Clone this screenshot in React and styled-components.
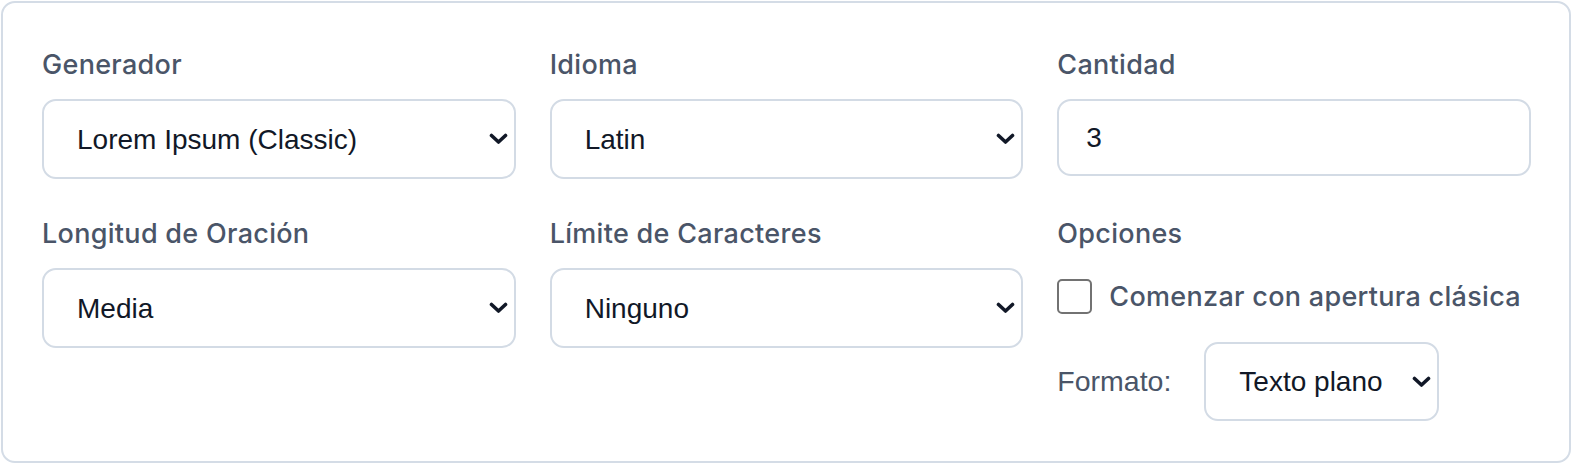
import React from 'react';
import styled, { createGlobalStyle } from 'styled-components';

const GlobalStyle = createGlobalStyle`
  html, body {
    margin: 0;
    padding: 0;
    background: #ffffff;
  }
  body {
    padding: 1px;
  }
`;

const Card = styled.div`
  box-sizing: border-box;
  width: 1570px;
  height: 462px;
  border: 2px solid #d4dce6;
  border-radius: 14px;
  background: #ffffff;
  padding: 46px 38px 0 39px;
  display: grid;
  grid-template-columns: repeat(3, 1fr);
  align-content: start;
  align-items: start;
  column-gap: 34px;
  row-gap: 39px;
`;

const Field = styled.div`
  display: flex;
  flex-direction: column;
  min-width: 0;
`;

const Label = styled.label`
  display: block;
  font-family: Inter, "Liberation Sans", sans-serif;
  font-weight: 500;
  font-size: 27px;
  line-height: 32px;
  letter-spacing: 0.3px;
  color: #4a5568;
  margin-bottom: 18px;
`;

const SelectWrap = styled.div`
  position: relative;
  width: ${p => p.$width || '100%'};
`;

const Select = styled.select`
  appearance: none;
  -webkit-appearance: none;
  box-sizing: border-box;
  width: 100%;
  height: ${p => p.$height || 80}px;
  padding: 0 40px 0 33px;
  border: 2px solid #d3dbe5;
  border-radius: 14px;
  background: #ffffff;
  font-family: "Liberation Sans", Arial, sans-serif;
  font-size: 28px;
  color: #111827;
  outline: none;
`;

const Chevron = styled.svg`
  position: absolute;
  right: 8px;
  top: 50%;
  width: 19px;
  height: 12px;
  margin-top: -6px;
  pointer-events: none;
`;

const TextInput = styled.input`
  box-sizing: border-box;
  width: 100%;
  height: 77px;
  padding: 0 27px;
  border: 2px solid #d3dbe5;
  border-radius: 14px;
  background: #ffffff;
  font-family: "Liberation Sans", Arial, sans-serif;
  font-size: 28px;
  color: #111827;
  outline: none;
`;

const Options = styled.div`
  display: flex;
  flex-direction: column;
  gap: 28px;
  padding-top: 11px;
`;

const CheckRow = styled.label`
  display: flex;
  align-items: center;
  gap: 17px;
  font-family: Inter, "Liberation Sans", sans-serif;
  font-weight: 500;
  font-size: 27px;
  letter-spacing: 0.3px;
  color: #4a5568;
`;

const Checkbox = styled.input`
  appearance: none;
  -webkit-appearance: none;
  box-sizing: border-box;
  width: 35px;
  height: 35px;
  margin: 0;
  border: 2px solid #727272;
  border-radius: 5px;
  background: #ffffff;
  flex-shrink: 0;
`;

const FormatRow = styled.div`
  display: flex;
  align-items: center;
  gap: 33px;
`;

const FormatLabel = styled.span`
  font-family: "Liberation Sans", Arial, sans-serif;
  font-size: 28.5px;
  color: #4a5568;
`;

function ChevronDown() {
  return (
    <Chevron viewBox="0 0 19 12" fill="none">
      <path d="M2.5 2.5 L9.5 9 L16.5 2.5" stroke="#111827" strokeWidth="3.6" strokeLinecap="round" strokeLinejoin="round" />
    </Chevron>
  );
}

function Dropdown({ options, value, width, height }) {
  return (
    <SelectWrap $width={width}>
      <Select defaultValue={value} $height={height}>
        {options.map(o => <option key={o}>{o}</option>)}
      </Select>
      <ChevronDown />
    </SelectWrap>
  );
}

export default function App() {
  return (
    <>
      <GlobalStyle />
      <Card>
        <Field>
          <Label>Generador</Label>
          <Dropdown options={['Lorem Ipsum (Classic)']} value="Lorem Ipsum (Classic)" />
        </Field>
        <Field>
          <Label>Idioma</Label>
          <Dropdown options={['Latin']} value="Latin" />
        </Field>
        <Field>
          <Label>Cantidad</Label>
          <TextInput type="number" defaultValue={3} />
        </Field>
        <Field>
          <Label>Longitud de Oración</Label>
          <Dropdown options={['Media']} value="Media" />
        </Field>
        <Field>
          <Label>Límite de Caracteres</Label>
          <Dropdown options={['Ninguno']} value="Ninguno" />
        </Field>
        <Field>
          <Label>Opciones</Label>
          <Options>
            <CheckRow>
              <Checkbox type="checkbox" />
              Comenzar con apertura clásica
            </CheckRow>
            <FormatRow>
              <FormatLabel>Formato:</FormatLabel>
              <Dropdown options={['Texto plano']} value="Texto plano" width="235px" height={79} />
            </FormatRow>
          </Options>
        </Field>
      </Card>
    </>
  );
}
